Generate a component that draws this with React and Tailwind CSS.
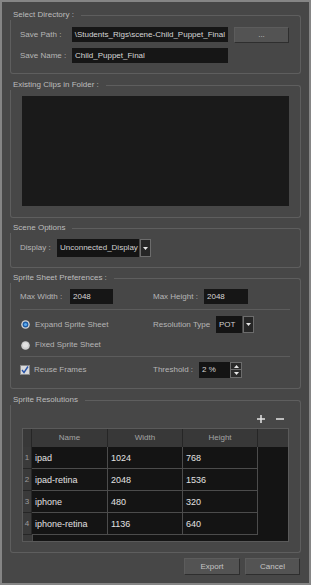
import React from 'react';

const Group = ({ title, className = '', boxClass = '', children }) => (
  <div className={className}>
    <div className="flex h-[10px] items-end">
      <span className="h-[10px] pl-[3px] pr-[7px] leading-[10px] text-[#bdbdbd]">{title}</span>
      <div className="h-[5px] flex-1 rounded-tr-[3px] border-t border-r border-[#5e5e5e]" />
    </div>
    <div className={`rounded-b-[3px] border-x border-b border-[#5e5e5e] ${boxClass}`}>{children}</div>
  </div>
);

const Arrow = ({ up = false }) => (
  <svg width="5" height="3" viewBox="0 0 5 3">
    <path d={up ? 'M0 3 L2.5 0 L5 3 Z' : 'M0 0 L5 0 L2.5 3 Z'} fill="#e6e6e6" />
  </svg>
);

const DropButton = () => (
  <div className="ml-px flex h-full w-[11px] items-center justify-center border border-[#6c6c6c] bg-[#262626]">
    <Arrow />
  </div>
);

const Button = ({ children, className = '' }) => (
  <div
    className={`flex items-center justify-center border border-[#2e2e2e] border-t-[#5c5c5c] border-l-[#5c5c5c] bg-[#535353] text-[#c4c4c4] ${className}`}
  >
    {children}
  </div>
);

const rows = [
  ['1', 'ipad', '1024', '768'],
  ['2', 'ipad-retina', '2048', '1536'],
  ['3', 'iphone', '480', '320'],
  ['4', 'iphone-retina', '1136', '640'],
];

export default function App() {
  return (
    <div className="flex h-[585px] w-[311px] flex-col border-2 border-[#858585] bg-[#474747] px-2 pt-2 font-['Liberation_Sans',Arial,sans-serif] text-[8px] leading-[10px] text-[#b6b6b6]">
      {/* Select Directory */}
      <Group title="Select Directory :" boxClass="pl-[9px] pr-[11px] pt-[7px] pb-[10px]">
        <div className="flex h-[16px] items-start">
          <span className="w-[52px] pt-[3px]">Save Path :</span>
          <div className="flex h-[15px] w-[156px] items-center justify-end overflow-hidden whitespace-nowrap bg-[#161616] pr-[3px] text-[#d6d6d6]">
            \Students_Rigs\scene-Child_Puppet_Final
          </div>
          <Button className="ml-[6px] h-[16px] w-[55px]">...</Button>
        </div>
        <div className="mt-[5px] flex h-[15px] items-center">
          <span className="w-[52px]">Save Name :</span>
          <div className="flex h-[15px] w-[156px] items-center bg-[#161616] pl-[3px] text-[#d6d6d6]">
            Child_Puppet_Final
          </div>
        </div>
      </Group>

      {/* Existing Clips */}
      <Group title="Existing Clips in Folder :" className="mt-[6px]" boxClass="px-[11px] pt-[6px] pb-[11px]">
        <div className="h-[110px] bg-[#1a1a1a]" />
      </Group>

      {/* Scene Options */}
      <Group title="Scene Options" className="mt-[5px]" boxClass="pl-[9px] pt-[6px] pb-[10px]">
        <div className="flex h-[18px] items-center">
          <span className="w-[37px]">Display :</span>
          <div className="flex h-full w-[82px] items-center bg-[#141414] pl-[3px] text-[#d0d0d0]">
            Unconnected_Display
          </div>
          <DropButton />
        </div>
      </Group>

      {/* Sprite Sheet Preferences */}
      <Group title="Sprite Sheet Preferences :" className="mt-[5px]" boxClass="pl-[9px] pr-[10px] pt-[6px] pb-[10px]">
        <div className="flex h-[15px] items-center">
          <span className="w-[50px]">Max Width :</span>
          <div className="flex h-full w-[43px] items-center bg-[#161616] pl-[3px] text-[#d6d6d6]">2048</div>
          <span className="ml-[40px] w-[51px]">Max Height :</span>
          <div className="flex h-full w-[44px] items-center bg-[#161616] pl-[3px] text-[#d6d6d6]">2048</div>
        </div>
        <div className="mt-[5px] h-px bg-[#5c5c5c]" />
        <div className="mt-[6px] flex h-[17px] items-center">
          <div className="flex w-[133px] items-center">
            <svg width="9" height="9" viewBox="0 0 9 9" className="ml-[1px]">
              <circle cx="4.5" cy="4.5" r="4.3" fill="#d2d2d2" />
              <circle cx="4.5" cy="4.5" r="2.9" fill="#1d5aa3" />
              <circle cx="4.5" cy="4.5" r="1.6" fill="#5aa9ee" />
            </svg>
            <span className="ml-[5px]">Expand Sprite Sheet</span>
          </div>
          <span className="w-[63px]">Resolution Type</span>
          <div className="flex h-full w-[26px] items-center bg-[#141414] pl-[3px] text-[#d0d0d0]">POT</div>
          <DropButton />
        </div>
        <div className="mt-[2px] flex h-[20px] items-center">
          <svg width="9" height="9" viewBox="0 0 9 9" className="ml-[1px]">
            <circle cx="4.5" cy="4.5" r="4.3" fill="#cfcfcf" />
            <circle cx="4.5" cy="4" r="2.6" fill="#e2e2e2" />
          </svg>
          <span className="ml-[5px]">Fixed Sprite Sheet</span>
        </div>
        <div className="mt-px h-px bg-[#5c5c5c]" />
        <div className="mt-[5px] flex h-[16px] items-center">
          <div className="flex w-[133px] items-center">
            <svg width="10" height="10" viewBox="0 0 10 10">
              <rect x="0.5" y="0.5" width="9" height="9" fill="#d9d9d9" stroke="#8a8a8a" />
              <path d="M2 5 L4 7.5 L8 1.5" fill="none" stroke="#2753a8" strokeWidth="1.4" />
            </svg>
            <span className="ml-[4px]">Reuse Frames</span>
          </div>
          <span className="w-[46px]">Threshold :</span>
          <div className="flex h-full w-[31px] items-center bg-[#141414] pl-[3px] text-[#d6d6d6]">2 %</div>
          <div className="flex h-full w-[12px] flex-col">
            <div className="flex h-[8px] items-center justify-center border border-[#6c6c6c] bg-[#2a2a2a]">
              <Arrow up />
            </div>
            <div className="flex h-[8px] items-center justify-center border border-t-0 border-[#6c6c6c] bg-[#2a2a2a]">
              <Arrow />
            </div>
          </div>
        </div>
      </Group>

      {/* Sprite Resolutions */}
      <Group title="Sprite Resolutions" className="mt-[6px]" boxClass="px-[11px] pt-[6px] pb-[10px]">
        <div className="flex h-[16px] items-center justify-end gap-[11px] pr-[5px]">
          <svg width="8" height="8" viewBox="0 0 8 8">
            <path d="M4 0 V8 M0 4 H8" stroke="#e4e4e4" strokeWidth="1.5" />
          </svg>
          <svg width="8" height="8" viewBox="0 0 8 8">
            <path d="M0 4 H8" stroke="#e4e4e4" strokeWidth="1.5" />
          </svg>
        </div>
        <div className="mt-px flex h-[114px] flex-col border border-[#5a5a5a] bg-[#141414]">
          <div className="flex h-[18px] bg-[#383838] text-[#a4a4a4]">
            <div className="w-[9px] border-r border-[#262626]" />
            <div className="flex w-[76px] items-center justify-center border-r border-[#262626]">Name</div>
            <div className="flex w-[75px] items-center justify-center border-r border-[#262626]">Width</div>
            <div className="flex w-[75px] items-center justify-center border-r border-[#262626]">Height</div>
            <div className="flex-1" />
          </div>
          {rows.map(([n, name, w, h]) => (
            <div key={n} className="flex h-[22px] text-[9px] text-[#e2e2e2]">
              <div className="flex w-[9px] items-center justify-center border-r border-b border-[#262626] bg-[#3a3a3a] text-[8px] text-[#9c9c9c]">
                {n}
              </div>
              <div className="flex w-[76px] items-center border-r border-b border-[#4c4c4c] pl-[3px]">{name}</div>
              <div className="flex w-[75px] items-center border-r border-b border-[#4c4c4c] pl-[3px]">{w}</div>
              <div className="flex w-[75px] items-center border-r border-b border-[#4c4c4c] pl-[3px]">{h}</div>
              <div className="flex-1" />
            </div>
          ))}
          <div className="flex flex-1">
            <div className="w-[9px] bg-[#3a3a3a]" />
            <div className="w-[226px] border-l border-[#4c4c4c]" />
          </div>
        </div>
      </Group>

      <div className="mt-[5px] flex justify-end gap-[5px] pr-px">
        <Button className="h-[17px] w-[56px]">Export</Button>
        <Button className="h-[17px] w-[55px]">Cancel</Button>
      </div>
    </div>
  );
}
